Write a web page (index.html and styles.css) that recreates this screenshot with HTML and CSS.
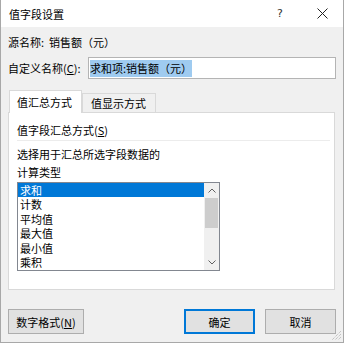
FILE: index.html
```html
<!DOCTYPE html>
<html lang="zh-CN">
<head>
  <meta charset="UTF-8">
  <title>值字段设置</title>
  <link rel="stylesheet" href="styles.css">
</head>
<body>

  <div class="dialog">

    <!-- Barra de título -->
    <div class="titlebar">
      <span class="title">值字段设置</span>
      <span class="tb-btn help">?</span>
      <span class="tb-btn close">
        <svg width="11" height="11" viewBox="0 0 11 11"><path d="M0.5 0.5 L10.5 10.5 M10.5 0.5 L0.5 10.5" stroke="#222" stroke-width="1" fill="none"/></svg>
      </span>
    </div>

    <div class="content">
      <div class="source">源名称:&nbsp;&nbsp;销售额（元）</div>

      <div class="name-row">
        <label>自定义名称(<u>C</u>):</label>
        <div class="name-input"><span class="sel">求和项:销售额（元）</span></div>
      </div>

      <!-- Separadores -->
      <div class="tabs">
        <div class="tab active">值汇总方式</div>
        <div class="tab">值显示方式</div>
      </div>

      <div class="panel">
        <div class="group-title">值字段汇总方式(<u>S</u>)</div>
        <div class="sep"></div>
        <div class="desc">选择用于汇总所选字段数据的<br>计算类型</div>

        <div class="listbox">
          <ul class="items">
            <li class="selected">求和</li>
            <li>计数</li>
            <li>平均值</li>
            <li>最大值</li>
            <li>最小值</li>
            <li>乘积</li>
          </ul>
          <div class="scrollbar">
            <div class="sb-arrow">
              <svg width="8" height="5" viewBox="0 0 8 5"><path d="M0.5 4.5 L4 1 L7.5 4.5" stroke="#606060" stroke-width="1" fill="none"/></svg>
            </div>
            <div class="sb-thumb"></div>
            <div class="sb-track"></div>
            <div class="sb-arrow">
              <svg width="8" height="5" viewBox="0 0 8 5"><path d="M0.5 0.5 L4 4 L7.5 0.5" stroke="#606060" stroke-width="1" fill="none"/></svg>
            </div>
          </div>
        </div>
      </div>

      <!-- Botões -->
      <div class="buttons">
        <button>数字格式(<u>N</u>)</button>
        <span class="spacer"></span>
        <button class="default">确定</button>
        <button>取消</button>
      </div>
    </div>

    <svg class="grip" width="10" height="10" viewBox="0 0 10 10">
      <path d="M9 3 L3 9 M9 6 L6 9 M9 0 L0 9" stroke="#b0b0b0" stroke-width="1" stroke-dasharray="1 1" fill="none"/>
    </svg>
  </div>

</body>
</html>
```

FILE: styles.css
```css
body {
  margin: 0;
  font-family: "Noto Sans CJK SC", "Noto Sans", sans-serif;
  font-size: 11px;
  color: #000;
  background: #fff;
}

.dialog {
  position: relative;
  width: 342px;
  height: 342px;
  background: #f0f0f0;
  border-left: 1px solid #a8a8a8;
  border-right: 1px solid #a8a8a8;
  border-bottom: 1px solid #a8a8a8;
  box-sizing: content-box;
}

/* Barra de título */
.titlebar {
  height: 27px;
  background: #fff;
  display: flex;
  align-items: center;
}

.title {
  padding-left: 8px;
  flex: 1;
  font-size: 11px;
}

.tb-btn {
  width: 42px;
  display: flex;
  justify-content: center;
  align-items: center;
  height: 27px;
}

.help {
  font-family: "DejaVu Sans", sans-serif;
  font-size: 11px;
  color: #333;
}

.close {
  margin-right: 0;
}

.content {
  padding: 0 7px;
}

.source {
  margin-top: 7px;
  height: 16px;
  line-height: 16px;
}

.name-row {
  margin-top: 7px;
  display: flex;
  align-items: center;
  height: 22px;
}

.name-row label {
  width: 80px;
}

.name-input {
  flex: 1;
  height: 22px;
  box-sizing: border-box;
  border: 1px solid #b4b4b4;
  background: #fff;
  display: flex;
  align-items: center;
  padding-left: 1px;
}

.sel {
  background: #9fcbf0;
  line-height: 17px;
}

/* Separadores */
.tabs {
  margin-top: 11px;
  display: flex;
  align-items: flex-end;
  height: 22px;
  padding-left: 1px;
  position: relative;
  z-index: 1;
}

.tab {
  height: 19px;
  line-height: 19px;
  padding: 0 9px 0 8px;
  border: 1px solid #d9d9d9;
  border-bottom: none;
  background: #f0f0f0;
  box-sizing: border-box;
}

.tab.active {
  height: 23px;
  line-height: 23px;
  background: #fff;
  padding: 0 9px 0 7px;
  margin-bottom: -1px;
}

.panel {
  height: 178px;
  margin-right: 1px;
  background: #fff;
  border: 1px solid #d9d9d9;
  padding: 9px 4px 0 8px;
  box-sizing: border-box;
}

.group-title {
  height: 16px;
  line-height: 16px;
}

.sep {
  margin-top: 2px;
  height: 1px;
  background: #ececec;
}

.desc {
  margin-top: 4px;
  line-height: 18px;
}

.listbox {
  margin-top: 1px;
  width: 203px;
  height: 89px;
  border: 1px solid #828790;
  box-sizing: border-box;
  display: flex;
}

.items {
  list-style: none;
  margin: 0;
  padding: 0;
  flex: 1;
  overflow: hidden;
}

.items li {
  height: 14.4px;
  line-height: 14.4px;
  padding-left: 2px;
}

.items li.selected {
  background: #0078d7;
  color: #fff;
}

.scrollbar {
  width: 15px;
  background: #f0f0f0;
  display: flex;
  flex-direction: column;
  align-items: center;
}

.sb-arrow {
  height: 15px;
  display: flex;
  align-items: center;
  justify-content: center;
}

.sb-thumb {
  width: 13px;
  height: 30px;
  background: #cdcdcd;
}

.sb-track {
  flex: 1;
}

/* Botões */
.buttons {
  margin-top: 19px;
  display: flex;
  gap: 10px;
}

.spacer {
  flex: 1;
}

.buttons button {
  width: 71px;
  height: 25px;
  font-family: inherit;
  font-size: 11px;
  color: #000;
  background: #e1e1e1;
  border: 1px solid #adadad;
  padding: 0;
}

.buttons button:first-child {
  width: 76px;
}

.buttons button.default {
  border: 2px solid #0078d7;
}

.grip {
  position: absolute;
  right: 1px;
  bottom: 1px;
}
```
